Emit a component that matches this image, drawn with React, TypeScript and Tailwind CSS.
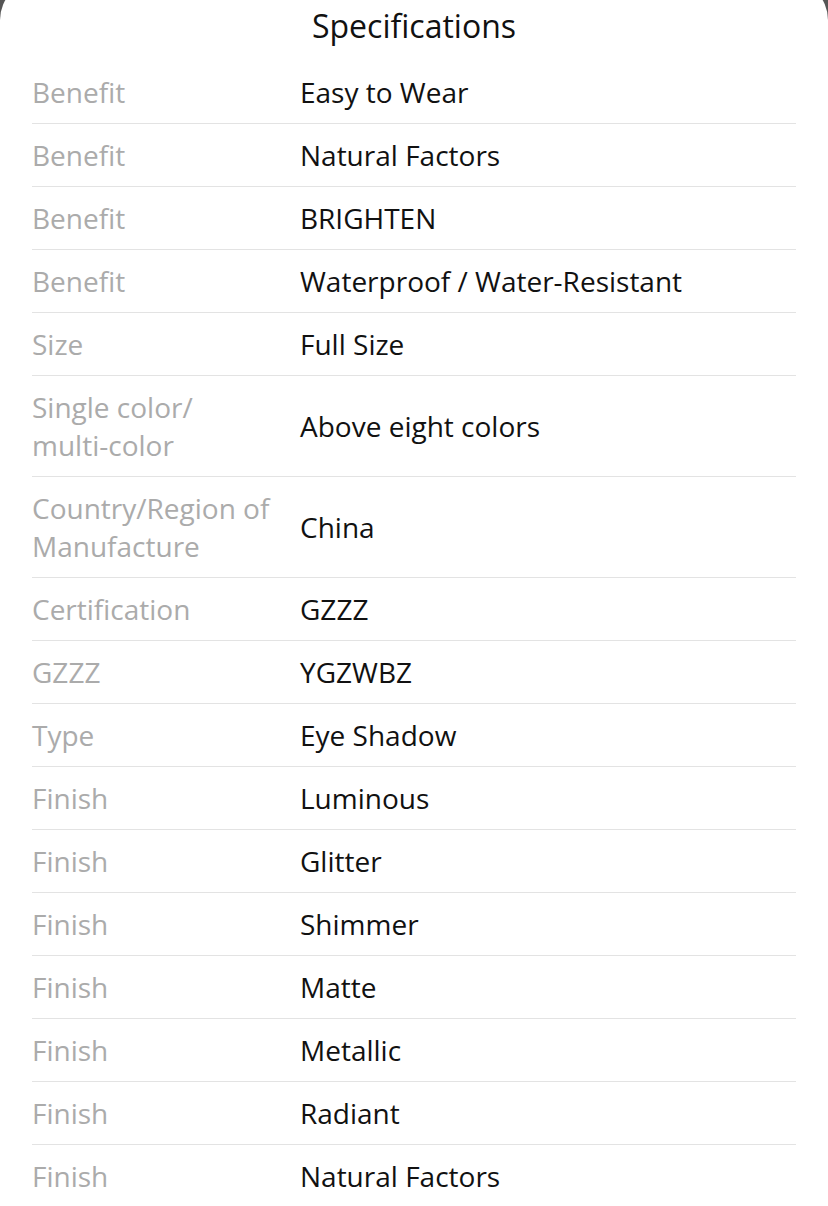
const specs: [string, string][] = [
  ["Benefit", "Easy to Wear"],
  ["Benefit", "Natural Factors"],
  ["Benefit", "BRIGHTEN"],
  ["Benefit", "Waterproof / Water-Resistant"],
  ["Size", "Full Size"],
  ["Single color/\nmulti-color", "Above eight colors"],
  ["Country/Region of\nManufacture", "China"],
  ["Certification", "GZZZ"],
  ["GZZZ", "YGZWBZ"],
  ["Type", "Eye Shadow"],
  ["Finish", "Luminous"],
  ["Finish", "Glitter"],
  ["Finish", "Shimmer"],
  ["Finish", "Matte"],
  ["Finish", "Metallic"],
  ["Finish", "Radiant"],
  ["Finish", "Natural Factors"],
]

export default function App() {
  return (
    <div className="w-[828px] h-[1206px] overflow-hidden bg-[#555555] font-['Open_Sans',sans-serif]">
      <div className="-mt-[20px] pt-[20px] bg-white rounded-t-[40px] h-[1226px]">
        <div className="h-[61px] flex justify-center pt-[5px]">
          <h1 className="text-[32px] leading-[42px] text-[#111111]">Specifications</h1>
        </div>
        <div className="px-8">
          {specs.map(([label, value], i) => (
            <div
              key={i}
              className="grid grid-cols-[268px_1fr] items-center py-3 border-b border-[#e3e3e3] text-[28px] leading-[38px]"
            >
              <div className="text-[#ababab] whitespace-pre-line">{label}</div>
              <div className="text-[#111111]">{value}</div>
            </div>
          ))}
        </div>
      </div>
    </div>
  )
}
